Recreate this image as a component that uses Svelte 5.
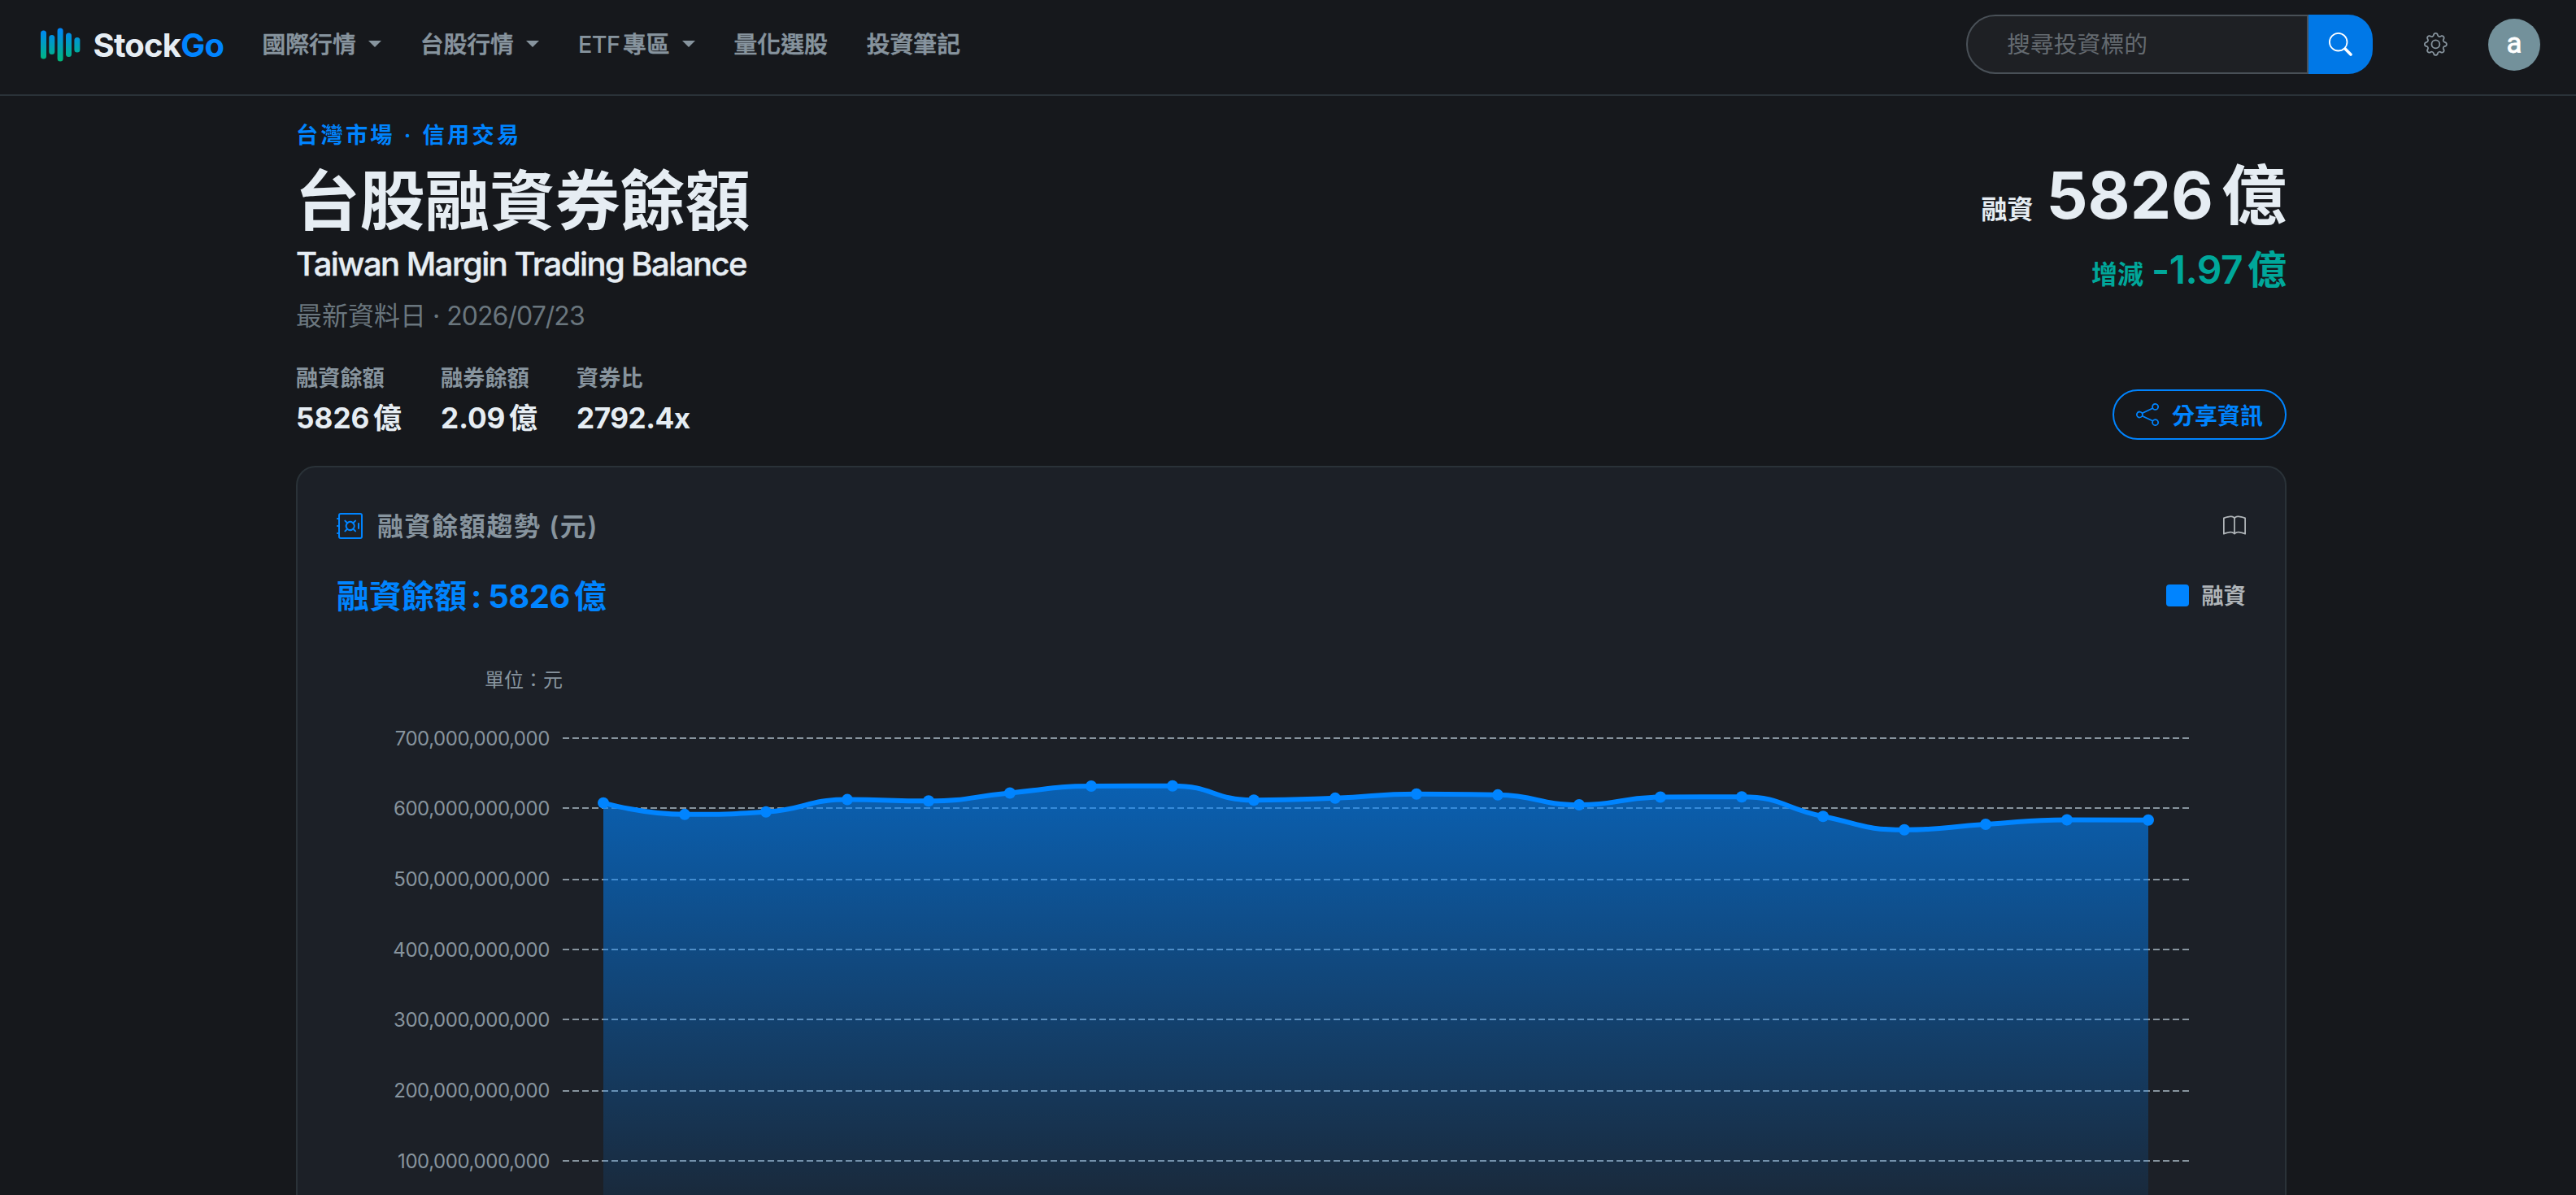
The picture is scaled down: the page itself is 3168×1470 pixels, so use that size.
<script>
  const navItems = [
    { latin: '', label: '國際行情', menu: true },
    { latin: '', label: '台股行情', menu: true },
    { latin: 'ETF', label: '專區', menu: true },
    { latin: '', label: '量化選股', menu: false },
    { latin: '', label: '投資筆記', menu: false },
  ];

  const stats = [
    { label: '融資餘額', value: '5826', unit: '億' },
    { label: '融券餘額', value: '2.09', unit: '億' },
    { label: '資券比', value: '2792.4x', unit: '' },
  ];

  // Margin balance per day, in units of 10^9 TWD
  const series = [
    608.1, 591.7, 595.3, 612.8, 610.8, 622.2, 632, 632.3, 612, 614.8,
    620.7, 619.4, 605.4, 616.3, 616.7, 589, 569.9, 577.7, 584, 583.7,
  ];

  const plot = { left: 278, right: 2278, top: 128, bottom: 734.7, max: 700 };
  const yOf = (v) => plot.bottom - (v / plot.max) * (plot.bottom - plot.top);
  const step = (plot.right - plot.left) / series.length;
  const points = series.map((v, i) => [plot.left + step * (i + 0.5), yOf(v)]);
  const ticks = [700, 600, 500, 400, 300, 200, 100].map((v) => ({
    label: `${v},000,000,000`,
    y: yOf(v),
    line: Math.round(yOf(v) / 2) * 2,
  }));

  const clamp = (v, a, b) => Math.min(Math.max(v, Math.min(a, b)), Math.max(a, b));

  // Bezier smoothing whose control points never leave the span of their neighbours
  function smoothPath(pts, smooth = 0.5) {
    let d = `M${pts[0][0]} ${pts[0][1]}`;
    let [c0x, c0y] = pts[0];
    for (let i = 1; i < pts.length; i++) {
      const [px, py] = pts[i - 1];
      const [x, y] = pts[i];
      let c1x = x, c1y = y, nx0 = x, ny0 = y;
      if (i < pts.length - 1) {
        const [nx, ny] = pts[i + 1];
        const lp = Math.hypot(x - px, y - py);
        const ln = Math.hypot(nx - x, ny - y);
        const r = ln / (ln + lp);
        nx0 = clamp(x + (nx - px) * smooth * r, nx, x);
        ny0 = clamp(y + (ny - py) * smooth * r, ny, y);
        c1x = clamp(x - ((nx0 - x) * lp) / ln, px, x);
        c1y = clamp(y - ((ny0 - y) * lp) / ln, py, y);
        nx0 = x + ((x - c1x) * ln) / lp;
        ny0 = y + ((y - c1y) * ln) / lp;
      }
      d += `C${c0x} ${c0y} ${c1x} ${c1y} ${x} ${y}`;
      c0x = nx0;
      c0y = ny0;
    }
    return d;
  }

  const line = smoothPath(points);
  const area = `${line}L${points[points.length - 1][0]} ${plot.bottom}L${points[0][0]} ${plot.bottom}Z`;
</script>

<div class="page">
  <header>
    <a class="brand" href="#top">
      <svg class="mark" viewBox="0 0 50 42">
        <defs>
          <linearGradient id="mark" x1="0" y1="0" x2="0" y2="42" gradientUnits="userSpaceOnUse">
            <stop offset="0" stop-color="#0084ff" />
            <stop offset="1" stop-color="#00b977" />
          </linearGradient>
        </defs>
        <g fill="url(#mark)">
          <rect x="0" y="3.5" width="7" height="35" rx="3.5" />
          <rect x="10.3" y="9" width="7" height="24" rx="3.5" />
          <rect x="20.6" y="0.5" width="7" height="41" rx="3.5" />
          <rect x="31" y="6.5" width="7" height="29.5" rx="3.5" />
          <rect x="41.4" y="12" width="7" height="18.5" rx="3.5" />
        </g>
      </svg>
      <span class="name">Stock<span class="go">Go</span></span>
    </a>
    <nav>
      {#each navItems as item}
        <a href="#top">
          {#if item.latin}<span class="latin">{item.latin}</span>{/if}{item.label}
          {#if item.menu}<i class="caret"></i>{/if}
        </a>
      {/each}
    </nav>
    <form class="search">
      <input type="text" placeholder="搜尋投資標的" />
      <button type="button" aria-label="搜尋">
        <svg viewBox="0 0 16 16"><path d="M11.742 10.344a6.5 6.5 0 1 0-1.397 1.398h-.001q.044.06.098.115l3.85 3.85a1 1 0 0 0 1.415-1.414l-3.85-3.85a1 1 0 0 0-.115-.1zM12 6.5a5.5 5.5 0 1 1-11 0 5.5 5.5 0 0 1 11 0" /></svg>
      </button>
    </form>
    <svg class="gear" viewBox="0 0 16 16">
      <path d="M8 4.754a3.246 3.246 0 1 0 0 6.492 3.246 3.246 0 0 0 0-6.492M5.754 8a2.246 2.246 0 1 1 4.492 0 2.246 2.246 0 0 1-4.492 0" />
      <path d="M9.796 1.343c-.527-1.79-3.065-1.79-3.592 0l-.094.319a.873.873 0 0 1-1.255.52l-.292-.16c-1.64-.892-3.433.902-2.54 2.541l.159.292a.873.873 0 0 1-.52 1.255l-.319.094c-1.79.527-1.79 3.065 0 3.592l.319.094a.873.873 0 0 1 .52 1.255l-.16.292c-.892 1.64.901 3.434 2.541 2.54l.292-.159a.873.873 0 0 1 1.255.52l.094.319c.527 1.79 3.065 1.79 3.592 0l.094-.319a.873.873 0 0 1 1.255-.52l.292.16c1.64.893 3.434-.902 2.54-2.541l-.159-.292a.873.873 0 0 1 .52-1.255l.319-.094c1.79-.527 1.79-3.065 0-3.592l-.319-.094a.873.873 0 0 1-.52-1.255l.16-.292c.893-1.64-.902-3.433-2.541-2.54l-.292.159a.873.873 0 0 1-1.255-.52zm-2.633.283c.246-.835 1.428-.835 1.674 0l.094.319a1.873 1.873 0 0 0 2.693 1.115l.291-.16c.764-.415 1.6.42 1.184 1.185l-.159.292a1.873 1.873 0 0 0 1.116 2.692l.318.094c.835.246.835 1.428 0 1.674l-.319.094a1.873 1.873 0 0 0-1.115 2.693l.16.291c.415.764-.42 1.6-1.185 1.184l-.291-.159a1.873 1.873 0 0 0-2.693 1.116l-.094.318c-.246.835-1.428.835-1.674 0l-.094-.319a1.873 1.873 0 0 0-2.692-1.115l-.292.16c-.764.415-1.6-.42-1.184-1.185l.159-.291A1.873 1.873 0 0 0 1.945 8.93l-.319-.094c-.835-.246-.835-1.428 0-1.674l.319-.094A1.873 1.873 0 0 0 3.06 4.377l-.16-.292c-.415-.764.42-1.6 1.185-1.184l.292.159a1.873 1.873 0 0 0 2.692-1.115z" />
    </svg>
    <div class="avatar">a</div>
  </header>

  <main>
    <section class="hero">
      <div class="intro">
        <p class="eyebrow">台灣市場 · 信用交易</p>
        <h1>台股融資券餘額</h1>
        <p class="subtitle">Taiwan Margin Trading Balance</p>
        <p class="date">最新資料日 · <span class="day">2026/07/23</span></p>
        <div class="stats">
          {#each stats as stat}
            <div>
              <p class="label">{stat.label}</p>
              <p class="value" class:ratio={!stat.unit}>{stat.value}{#if stat.unit}<span class="unit">{stat.unit}</span>{/if}</p>
            </div>
          {/each}
        </div>
      </div>
      <div class="quote">
        <p class="total"><small>融資</small><span>5826<span class="unit">億</span></span></p>
        <p class="delta"><small>增減</small><span>-1.97<span class="unit">億</span></span></p>
        <button class="share" type="button">
          <svg viewBox="0 0 16 16"><path d="M13.5 1a1.5 1.5 0 1 0 0 3 1.5 1.5 0 0 0 0-3M11 2.5a2.5 2.5 0 1 1 .603 1.628l-6.718 3.12a2.5 2.5 0 0 1 0 1.504l6.718 3.12a2.5 2.5 0 1 1-.488.876l-6.718-3.12a2.5 2.5 0 1 1 0-3.256l6.718-3.12A2.5 2.5 0 0 1 11 2.5m-8.5 4a1.5 1.5 0 1 0 0 3 1.5 1.5 0 0 0 0-3m11 5.5a1.5 1.5 0 1 0 0 3 1.5 1.5 0 0 0 0-3" /></svg>
          <span>分享資訊</span>
        </button>
      </div>
    </section>

    <section class="card">
      <div class="card-head">
        <svg class="safe" viewBox="0 0 16 16">
          <path d="M1 1.5A1.5 1.5 0 0 1 2.5 0h12A1.5 1.5 0 0 1 16 1.5v13a1.5 1.5 0 0 1-1.5 1.5h-12A1.5 1.5 0 0 1 1 14.5V13H.5a.5.5 0 0 1 0-1H1V8.5H.5a.5.5 0 0 1 0-1H1V4H.5a.5.5 0 0 1 0-1H1zM2.5 1a.5.5 0 0 0-.5.5v13a.5.5 0 0 0 .5.5h12a.5.5 0 0 0 .5-.5v-13a.5.5 0 0 0-.5-.5z" />
          <path d="M13.5 6a.5.5 0 0 1 .5.5v3a.5.5 0 0 1-1 0v-3a.5.5 0 0 1 .5-.5M4.828 4.464a.5.5 0 0 1 .708 0l1.09 1.09a3 3 0 0 1 3.476 0l1.09-1.09a.5.5 0 1 1 .707.708l-1.09 1.09c.74 1.037.74 2.44 0 3.476l1.09 1.09a.5.5 0 1 1-.707.708l-1.09-1.09a3 3 0 0 1-3.476 0l-1.09 1.09a.5.5 0 1 1-.708-.708l1.09-1.09a3 3 0 0 1 0-3.476l-1.09-1.09a.5.5 0 0 1 0-.708M6.95 6.586a2 2 0 1 0 2.828 2.828A2 2 0 0 0 6.95 6.586" />
        </svg>
        <h2>融資餘額趨勢 (元)</h2>
        <svg class="book" viewBox="0 0 16 16"><path d="M1 2.828c.885-.37 2.154-.769 3.388-.893 1.33-.134 2.458.063 3.112.752v9.746c-.935-.53-2.12-.603-3.213-.493-1.18.12-2.37.461-3.287.811zm7.5-.141c.654-.689 1.782-.886 3.112-.752 1.234.124 2.503.523 3.388.893v9.923c-.918-.35-2.107-.692-3.287-.81-1.094-.111-2.278-.039-3.213.492zM8 1.783C7.015.936 5.587.81 4.287.94c-1.514.153-3.042.672-3.994 1.105A.5.5 0 0 0 0 2.5v11a.5.5 0 0 0 .707.455c.882-.4 2.303-.881 3.68-1.02 1.409-.142 2.59.087 3.223.877a.5.5 0 0 0 .78 0c.633-.79 1.814-1.019 3.222-.877 1.378.139 2.8.62 3.681 1.02A.5.5 0 0 0 16 13.5v-11a.5.5 0 0 0-.293-.455c-.952-.433-2.48-.952-3.994-1.105C10.413.809 8.985.936 8 1.783" /></svg>
      </div>
      <div class="summary">
        <p class="current">融資餘額<span class="colon">:</span> <span class="amount">5826</span><span class="unit">億</span></p>
        <p class="legend"><i></i>融資</p>
      </div>
      <svg class="chart" viewBox="0 0 2348 690">
        <defs>
          <linearGradient id="fill" x1="0" y1="186" x2="0" y2={plot.bottom} gradientUnits="userSpaceOnUse">
            <stop offset="0" stop-color="#0084ff" stop-opacity="0.64" />
            <stop offset="1" stop-color="#0084ff" stop-opacity="0.05" />
          </linearGradient>
        </defs>
        <text class="axis" x={plot.left} y="64.5" text-anchor="end">單位：元</text>
        {#each ticks as tick}
          <text class="axis tick" x="262" y={tick.y + 8.5} text-anchor="end">{tick.label}</text>
          <line class="grid" x1={plot.left} x2={plot.right} y1={tick.line} y2={tick.line} />
        {/each}
        <path d={area} fill="url(#fill)" />
        <path class="trend" d={line} />
        {#each points as [x, y]}
          <circle class="dot" cx={x} cy={y} r="7" />
        {/each}
      </svg>
    </section>
  </main>
</div>

<style>
  :global(body) {
    background: #16181c;
  }

  .page {
    width: 3168px;
    height: 1470px;
    overflow: hidden;
    background: #16181c;
    color: #e6edf3;
    font-family: Inter, 'Noto Sans CJK TC', sans-serif;
  }

  p,
  h1,
  h2 {
    margin: 0;
  }

  a {
    color: inherit;
    text-decoration: none;
  }

  svg {
    display: block;
    flex: none;
    fill: currentColor;
  }

  .unit {
    margin-left: 0.125em;
    letter-spacing: 0;
  }

  header {
    box-sizing: border-box;
    height: 118px;
    padding: 0 44px 7px 50px;
    border-bottom: 2px solid #2a3238;
    display: flex;
    align-items: center;
  }

  .brand {
    display: flex;
    align-items: center;
    gap: 14.5px;
  }

  .mark {
    width: 50px;
    height: 42px;
  }

  .name {
    width: 160px;
    font-size: 40px;
    line-height: 50px;
    font-weight: 700;
    letter-spacing: -0.02em;
    padding-top: 3px;
  }

  .go {
    color: #0084ff;
  }

  nav {
    display: flex;
    gap: 48px;
    margin-left: 48px;
    padding-top: 1px;
    color: #87949e;
    font-size: 28.8px;
    line-height: 44px;
    font-weight: 500;
    -webkit-text-stroke: 0.6px currentColor;
  }

  nav a {
    display: flex;
    align-items: center;
  }

  .latin {
    margin-right: 0.125em;
    letter-spacing: -0.02em;
    -webkit-text-stroke: 0;
  }

  .caret {
    margin: 0 0 2px 15px;
    border: 8px solid transparent;
    border-top-color: currentColor;
    border-bottom: 0;
  }

  .search {
    margin: 0 0 0 auto;
    display: flex;
    width: 500px;
    height: 73px;
  }

  .search input {
    box-sizing: border-box;
    flex: 1;
    min-width: 0;
    padding: 0 48px;
    border: 2px solid #495057;
    border-radius: 36px 0 0 36px;
    background: #1e2024;
    color: inherit;
    font: 400 28.8px Inter, 'Noto Sans CJK TC', sans-serif;
  }

  .search input::placeholder {
    color: #646a70;
    opacity: 1;
  }

  .search button {
    width: 79px;
    padding: 0;
    border: 0;
    border-radius: 0 30px 30px 0;
    background: #0078e7;
    color: #fff;
    display: flex;
    align-items: center;
    justify-content: center;
  }

  .search svg,
  .gear {
    width: 28.8px;
    height: 28.8px;
  }

  .gear {
    margin: 0 50px 0 63px;
    color: #87949e;
  }

  .avatar {
    width: 64px;
    height: 64px;
    margin-top: 1px;
    border-radius: 50%;
    background: #73919b;
    color: #fff;
    font-family: Roboto, sans-serif;
    font-size: 35px;
    line-height: 61px;
    font-weight: 400;
    text-align: center;
    -webkit-text-stroke: 0.8px currentColor;
  }

  main {
    width: 2448px;
    margin: 0 auto;
    padding: 29px 0 0 8px;
  }

  .hero {
    display: flex;
    justify-content: space-between;
    height: 394px;
  }

  .eyebrow {
    color: #0084ff;
    font-size: 27.2px;
    line-height: 40px;
    font-weight: 600;
    letter-spacing: 0.12em;
    word-spacing: 0.8px;
  }

  h1 {
    margin: 10px 0 0 -1.5px;
    font-size: 80px;
    line-height: 100px;
    font-weight: 700;
  }

  .subtitle {
    margin-top: 4px;
    font-size: 40px;
    line-height: 48px;
    font-weight: 500;
    letter-spacing: -0.0385em;
    -webkit-text-stroke: 0.4px currentColor;
  }

  .date {
    margin-top: 20px;
    color: #6a767e;
    font-size: 32px;
    line-height: 40px;
    word-spacing: -1px;
  }

  .day {
    letter-spacing: -0.03em;
  }

  .stats {
    display: flex;
    gap: 48px;
    margin-top: 39px;
  }

  .label {
    color: #87949e;
    font-size: 27.2px;
    line-height: 36px;
    font-weight: 600;
  }

  .value {
    margin-top: 8px;
    font-size: 35.2px;
    line-height: 44px;
    font-weight: 700;
  }

  .ratio {
    letter-spacing: -0.015em;
  }

  .quote {
    display: flex;
    flex-direction: column;
    align-items: flex-end;
  }

  .quote p {
    display: flex;
    align-items: baseline;
  }

  .quote small {
    font-size: 32px;
    line-height: 32px;
  }

  .total {
    margin-top: 43px;
    gap: 16px;
    font-size: 80px;
    line-height: 100px;
    font-weight: 700;
  }

  .delta {
    margin-top: 12px;
    gap: 10px;
    color: #00a79a;
    font-size: 48px;
    line-height: 60px;
    font-weight: 600;
    letter-spacing: -0.012em;
  }

  .delta small {
    letter-spacing: 0;
  }

  .share {
    box-sizing: border-box;
    width: 214px;
    height: 62px;
    margin-top: auto;
    padding: 0 0 0 27px;
    border: 2px solid #0084ff;
    border-radius: 31px;
    background: none;
    color: #0084ff;
    font: 600 28px Inter, 'Noto Sans CJK TC', sans-serif;
    display: flex;
    align-items: center;
    gap: 16px;
  }

  .share svg {
    width: 28px;
    height: 28px;
  }

  .share span {
    padding-bottom: 1px;
  }

  .card {
    box-sizing: border-box;
    height: 930px;
    margin-top: 32px;
    padding: 50px 48px 0;
    border: 2px solid #2a3238;
    border-radius: 24px;
    background: #1c2027;
  }

  .card-head {
    display: flex;
    align-items: center;
    height: 44px;
  }

  .safe {
    width: 32px;
    height: 32px;
    color: #0084ff;
  }

  h2 {
    margin-left: 18px;
    padding-top: 2px;
    color: #87949e;
    font-size: 32px;
    line-height: 44px;
    font-weight: 600;
    letter-spacing: 0.05em;
  }

  .book {
    width: 28px;
    height: 28px;
    margin-left: auto;
    color: #b0b5b9;
  }

  .summary {
    display: flex;
    align-items: center;
    justify-content: space-between;
    margin-top: 41px;
    height: 48px;
  }

  .current {
    color: #0084ff;
    font-size: 40px;
    line-height: 48px;
    font-weight: 700;
  }

  .colon {
    margin-left: 0.125em;
  }

  .amount {
    margin-left: -1.5px;
    letter-spacing: -0.015em;
  }

  .legend {
    display: flex;
    align-items: center;
    gap: 16px;
    color: #b0b5b9;
    font-size: 27.2px;
    line-height: 40px;
    font-weight: 600;
  }

  .legend i {
    width: 1em;
    height: 1em;
    margin-bottom: 3px;
    border-radius: 4px;
    background: #0084ff;
  }

  .chart {
    width: 2348px;
    height: 690px;
    margin-top: 22px;
  }

  .axis {
    fill: #87949e;
    font-size: 24px;
  }

  .tick {
    letter-spacing: -0.018em;
  }

  .grid {
    stroke: #87949e;
    stroke-width: 2;
    stroke-dasharray: 8 4;
  }

  .trend {
    fill: none;
    stroke: #0084ff;
    stroke-width: 6;
    stroke-linejoin: bevel;
  }

  .dot {
    fill: #0084ff;
  }
</style>
